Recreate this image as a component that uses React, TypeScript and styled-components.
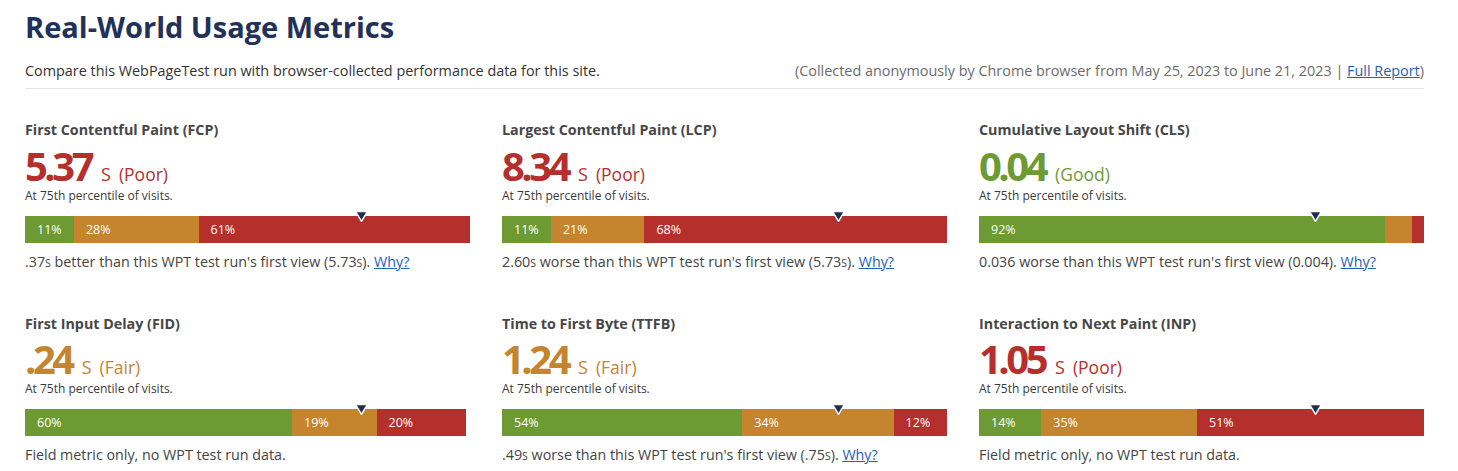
import React from 'react';
import styled, { createGlobalStyle } from 'styled-components';

type Rating = 'good' | 'fair' | 'poor';

const colors: Record<Rating, string> = {
  good: '#6d9a33',
  fair: '#c5842e',
  poor: '#b5302c',
};

const GlobalStyle = createGlobalStyle`
  html, body {
    margin: 0;
    padding: 0;
    background: #fff;
  }
  body {
    font-family: 'Open Sans', 'Liberation Sans', sans-serif;
    color: #333;
  }
`;

const Page = styled.div`
  padding: 8px 34px 0 25px;
`;

const Title = styled.h2`
  margin: 0;
  font-size: 29px;
  line-height: 38px;
  font-weight: 700;
  color: #22315a;
`;

const Intro = styled.div`
  display: flex;
  justify-content: space-between;
  align-items: baseline;
  margin-top: 15px;
  padding-bottom: 7px;
  border-bottom: 1px solid #e6e6e6;
  font-size: 14.4px;
  line-height: 20px;
`;

const Source = styled.span`
  color: #6b6b6b;
`;

const Link = styled.a`
  color: #1f5fb8;
  text-decoration: underline;
  cursor: pointer;
`;

const Grid = styled.div`
  display: grid;
  grid-template-columns: repeat(3, 445px);
  column-gap: 32px;
  row-gap: 41px;
  margin-top: 31px;
`;

const Metric = styled.section`
  display: flex;
  flex-direction: column;
`;

const MetricName = styled.h3`
  margin: 0;
  font-size: 14.3px;
  line-height: 20px;
  font-weight: 700;
  color: #474747;
`;

const ValueLine = styled.div<{ $rating: Rating }>`
  display: flex;
  align-items: baseline;
  gap: 8px;
  margin-top: 3.5px;
  height: 44px;
  line-height: 44px;
  color: ${({ $rating }) => colors[$rating]};
`;

const BigNumber = styled.span`
  font-size: 40px;
  font-weight: 700;
  letter-spacing: -3.5px;
  padding-right: 2px;
`;

const Unit = styled.span`
  font-size: 18px;
  text-transform: uppercase;
`;

const RatingLabel = styled.span`
  font-size: 17.5px;
`;

const Percentile = styled.div`
  font-size: 12px;
  line-height: 15px;
  color: #3a3a3a;
`;

const BarWrap = styled.div`
  position: relative;
  margin-top: 13px;
`;

const Bar = styled.div`
  display: flex;
  height: 27px;
`;

const Segment = styled.div<{ $rating: Rating }>`
  display: flex;
  align-items: center;
  padding-left: 12px;
  box-sizing: border-box;
  overflow: hidden;
  background: ${({ $rating }) => colors[$rating]};
  color: #fff;
  font-size: 12.5px;
  white-space: nowrap;
`;

const Marker = styled.svg`
  position: absolute;
  top: -5px;
  left: calc(75% - 4px);
  width: 13px;
  height: 11px;
`;

const Note = styled.p`
  margin: 9px 0 0;
  font-size: 14.3px;
  line-height: 20px;
  color: #444;
`;

const SmallUnit = styled.span`
  font-size: 10.5px;
  text-transform: uppercase;
`;

interface MetricData {
  name: string;
  value: string;
  unit?: string;
  rating: Rating;
  dist: [number, number, number];
  note: React.ReactNode;
}

const S = () => <SmallUnit>s</SmallUnit>;
const Why = () => <Link>Why?</Link>;

const metrics: MetricData[] = [
  {
    name: 'First Contentful Paint (FCP)',
    value: '5.37',
    unit: 's',
    rating: 'poor',
    dist: [11, 28, 61],
    note: <>.37<S /> better than this WPT test run's first view (5.73<S />). <Why /></>,
  },
  {
    name: 'Largest Contentful Paint (LCP)',
    value: '8.34',
    unit: 's',
    rating: 'poor',
    dist: [11, 21, 68],
    note: <>2.60<S /> worse than this WPT test run's first view (5.73<S />). <Why /></>,
  },
  {
    name: 'Cumulative Layout Shift (CLS)',
    value: '0.04',
    rating: 'good',
    dist: [92, 6, 2],
    note: <>0.036 worse than this WPT test run's first view (0.004). <Why /></>,
  },
  {
    name: 'First Input Delay (FID)',
    value: '.24',
    unit: 's',
    rating: 'fair',
    dist: [60, 19, 20],
    note: <>Field metric only, no WPT test run data.</>,
  },
  {
    name: 'Time to First Byte (TTFB)',
    value: '1.24',
    unit: 's',
    rating: 'fair',
    dist: [54, 34, 12],
    note: <>.49<S /> worse than this WPT test run's first view (.75<S />). <Why /></>,
  },
  {
    name: 'Interaction to Next Paint (INP)',
    value: '1.05',
    unit: 's',
    rating: 'poor',
    dist: [14, 35, 51],
    note: <>Field metric only, no WPT test run data.</>,
  },
];

const ratingText: Record<Rating, string> = { good: 'Good', fair: 'Fair', poor: 'Poor' };
const order: Rating[] = ['good', 'fair', 'poor'];

const MetricCard: React.FC<{ m: MetricData }> = ({ m }) => (
  <Metric>
    <MetricName>{m.name}</MetricName>
    <ValueLine $rating={m.rating}>
      <BigNumber>{m.value}</BigNumber>
      {m.unit && <Unit>{m.unit}</Unit>}
      <RatingLabel>({ratingText[m.rating]})</RatingLabel>
    </ValueLine>
    <Percentile>At 75th percentile of visits.</Percentile>
    <BarWrap>
      <Bar>
        {m.dist.map((pct, i) => (
          <Segment key={order[i]} $rating={order[i]} style={{ width: `${pct}%` }}>
            {pct >= 10 ? `${pct}%` : ''}
          </Segment>
        ))}
      </Bar>
      <Marker viewBox="0 0 13 11">
        <path d="M0.5 0.5 L12.5 0.5 L6.5 10.3 Z" fill="#1f2d50" stroke="#fff" strokeWidth="1.5" />
      </Marker>
    </BarWrap>
    <Note>{m.note}</Note>
  </Metric>
);

export default function App() {
  return (
    <Page>
      <GlobalStyle />
      <Title>Real-World Usage Metrics</Title>
      <Intro>
        <span>Compare this WebPageTest run with browser-collected performance data for this site.</span>
        <Source>
          (Collected anonymously by Chrome browser from May 25, 2023 to June 21, 2023 | <Link>Full Report</Link>)
        </Source>
      </Intro>
      <Grid>
        {metrics.map(m => (
          <MetricCard key={m.name} m={m} />
        ))}
      </Grid>
    </Page>
  );
}
